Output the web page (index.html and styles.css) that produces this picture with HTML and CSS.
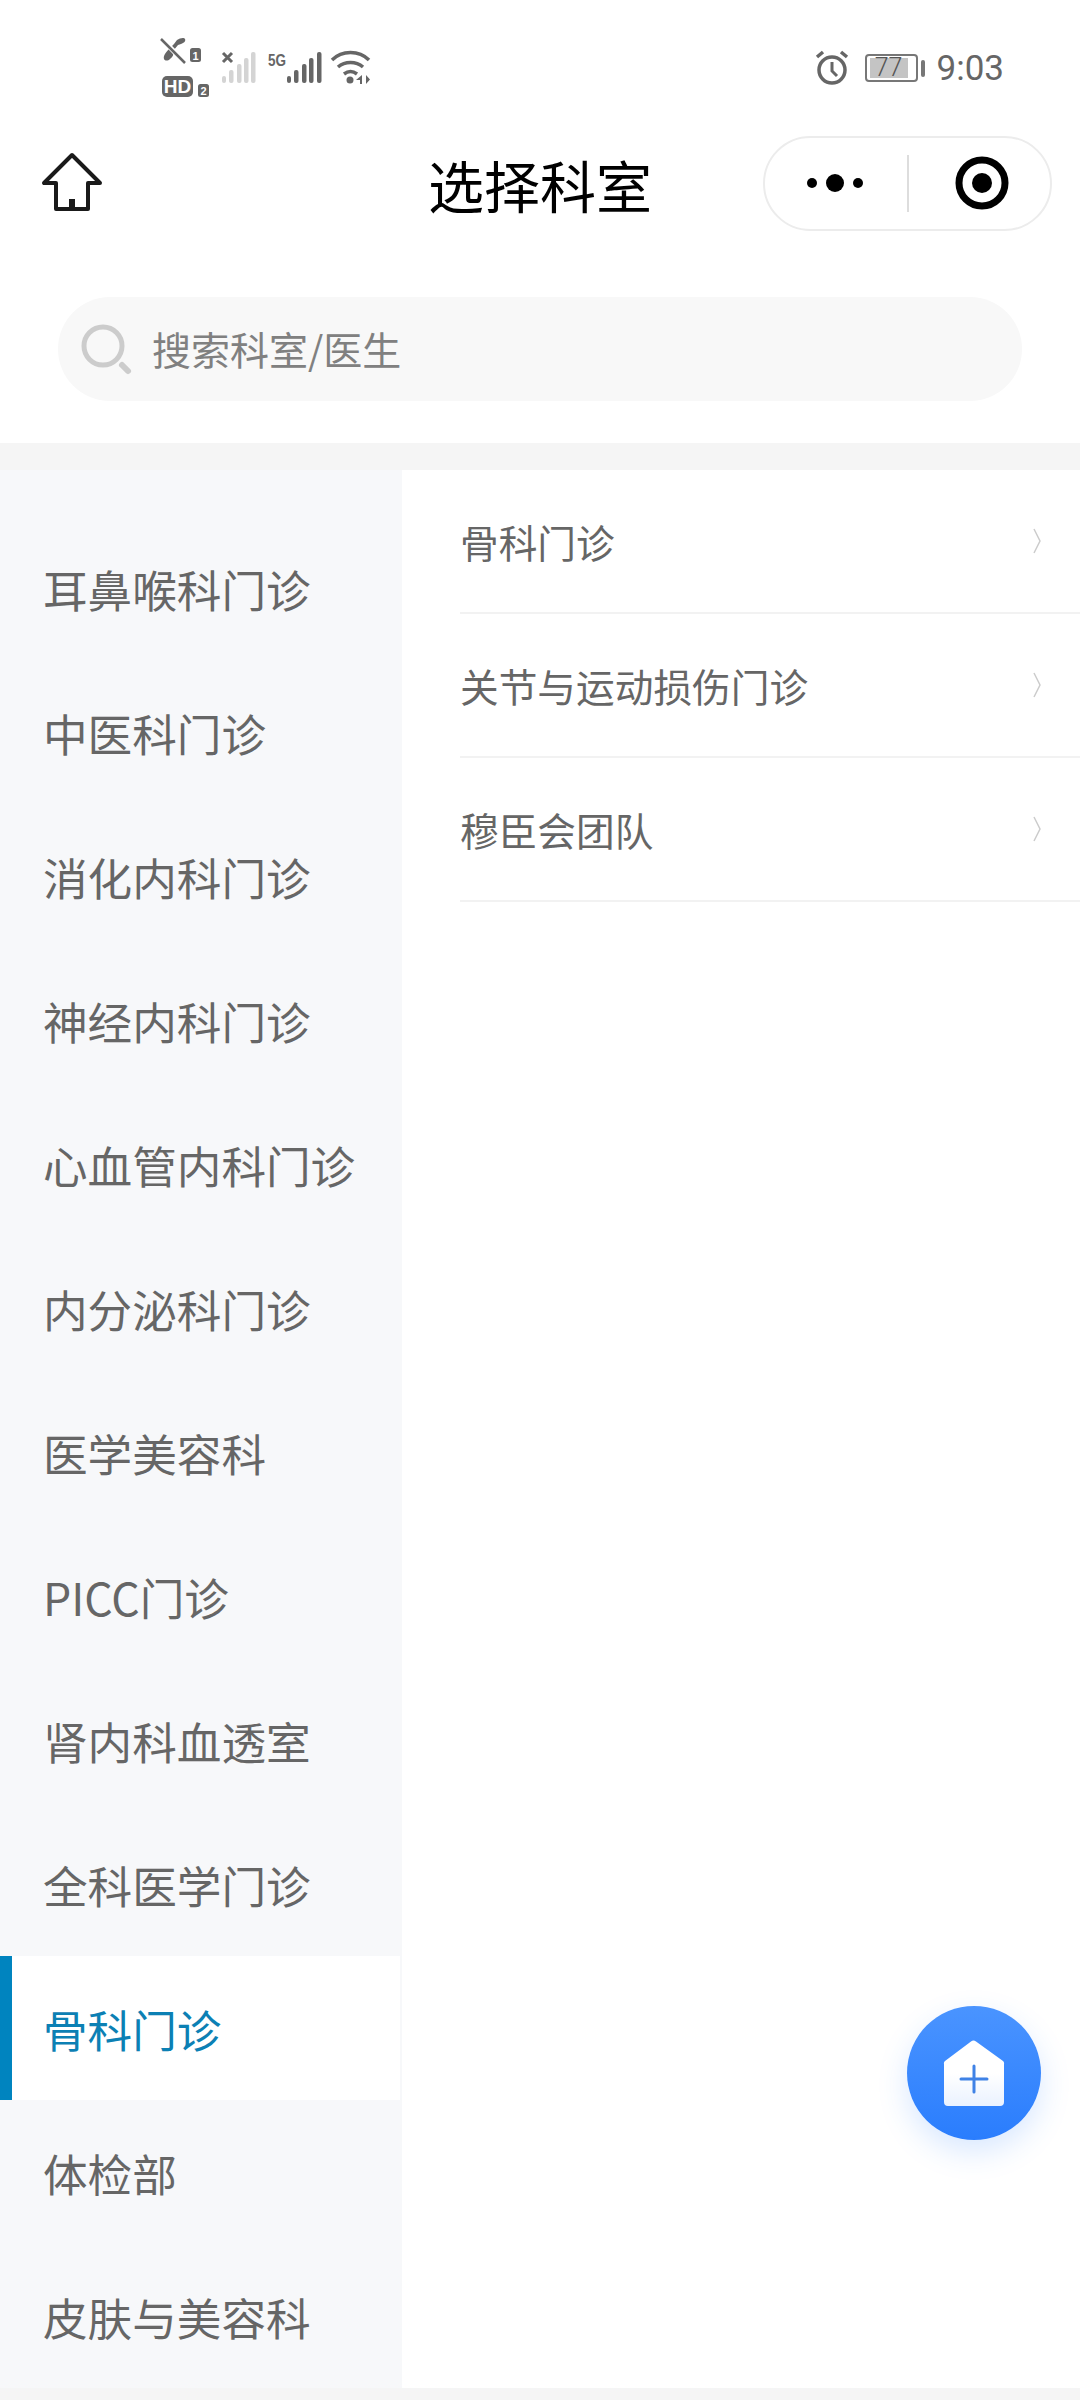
FILE: index.html
```html
<!DOCTYPE html>
<html lang="zh-CN">
<head>
  <meta charset="UTF-8">
  <title>选择科室</title>
  <meta name="viewport" content="width=device-width, initial-scale=1">
  <link rel="stylesheet" href="styles.css">
</head>
<body>

<div class="page">

  <div class="status-bar">
    <svg width="212" height="64" viewBox="160 36 212 64">
      <!-- call + sim 1 -->
      <path d="M177 40c3-2 7-3 8-1s-1 4-4 5l-3 1-5 6c1 3 0 6-3 8-2 2-5 2-6 0-1-3 2-7 5-10l5-5z" fill="#666"/>
      <path d="M162 39l23 24" stroke="#fff" stroke-width="5"/>
      <path d="M161 39l24 24" stroke="#666" stroke-width="2.5"/>
      <rect x="190" y="48" width="11" height="14" rx="2.5" fill="#666"/>
      <text x="195.5" y="59.5" class="tiny-num">1</text>
      <!-- hd + sim 2 -->
      <rect x="162" y="76" width="31" height="21" rx="5" fill="#666"/>
      <text x="177.5" y="92.500" class="hd-text">HD</text>
      <rect x="198" y="84" width="11" height="13" rx="2.5" fill="#666"/>
      <text x="203.5" y="95" class="tiny-num">2</text>
      <!-- sim 1 signal -->
      <path d="M223 53l9 9M232 53l-9 9" stroke="#666" stroke-width="3"/>
      <g fill="#d4d4d4">
        <rect x="222" y="76" width="4" height="7" rx="2"/>
        <rect x="229" y="70" width="4.5" height="13" rx="2"/>
        <rect x="237" y="64" width="4.5" height="19" rx="2"/>
        <rect x="244" y="58" width="4.5" height="25" rx="2"/>
        <rect x="251" y="52" width="4.5" height="31" rx="2"/>
      </g>
      <!-- 5g signal -->
      <text x="268" y="65.500" class="five-g" textLength="18" lengthAdjust="spacingAndGlyphs">5G</text>
      <g fill="#666">
        <rect x="287" y="76" width="4" height="7" rx="2"/>
        <rect x="294" y="70" width="4.5" height="13" rx="2"/>
        <rect x="302" y="64" width="4.5" height="19" rx="2"/>
        <rect x="309" y="58" width="4.5" height="25" rx="2"/>
        <rect x="317" y="52" width="4.5" height="31" rx="2"/>
      </g>
      <!-- wifi -->
      <g fill="none" stroke="#666" stroke-width="3.5">
        <path d="M332 60c10-10 27-10 37 0"/>
        <path d="M338 67c7-6 18-6 25 0"/>
        <path d="M344 74c4-3 9-3 13 0"/>
      </g>
      <circle cx="350" cy="80" r="3.5" fill="#666"/>
      <path d="M362 75v9h-2v-4h-4zM366 75v9l4-4.500z" fill="#666"/>
    </svg>

    <div class="status-right">
      <svg width="36" height="36" viewBox="0 0 36 36" fill="none" stroke="#666">
        <circle cx="18" cy="20" r="13" stroke-width="3.5"/>
        <path d="M18 12v9l5 5" stroke-width="3"/>
        <path d="M3 7l6-5M33 7l-6-5" stroke-width="3.5"/>
      </svg>
      <div class="battery">
        <div class="battery-box">
          <div class="battery-fill"></div>
          <span class="battery-num">77</span>
        </div>
        <div class="battery-nub"></div>
      </div>
      <span class="clock">9:03</span>
    </div>
  </div>

  <div class="nav">
    <svg class="nav-home" width="60" height="60" viewBox="0 0 60 60" fill="none" stroke="#1a1a1a" stroke-width="4" stroke-linejoin="round">
      <path d="M30 2L2 30h12v26h32V30h12z"/>
      <rect x="27" y="46" width="6" height="10" fill="#1a1a1a" stroke="none"/>
    </svg>
    <h1 class="nav-title">选择科室</h1>
    <div class="capsule">
      <svg width="56" height="20" viewBox="0 0 56 20" fill="#000">
        <circle cx="5" cy="10" r="5"/>
        <circle cx="28" cy="10" r="9"/>
        <circle cx="51" cy="10" r="5"/>
      </svg>
      <div class="capsule-line"></div>
      <svg width="54" height="54" viewBox="0 0 54 54">
        <circle cx="27" cy="27" r="23" fill="none" stroke="#000" stroke-width="7"/>
        <circle cx="27" cy="27" r="10" fill="#000"/>
      </svg>
    </div>
  </div>

  <div class="search-wrap">
    <div class="search-bar">
      <svg width="54" height="54" viewBox="0 0 54 54" fill="none" stroke="#ccc">
        <circle cx="24" cy="24" r="19" stroke-width="5"/>
        <path d="M43 43l6 6" stroke-width="6" stroke-linecap="round"/>
      </svg>
      <span class="search-hint">搜索科室/医生</span>
    </div>
  </div>

  <div class="main">
    <div class="dept-list">
      <div class="dept">耳鼻喉科门诊</div>
      <div class="dept">中医科门诊</div>
      <div class="dept">消化内科门诊</div>
      <div class="dept">神经内科门诊</div>
      <div class="dept">心血管内科门诊</div>
      <div class="dept">内分泌科门诊</div>
      <div class="dept">医学美容科</div>
      <div class="dept">PICC门诊</div>
      <div class="dept">肾内科血透室</div>
      <div class="dept">全科医学门诊</div>
      <div class="dept active">骨科门诊</div>
      <div class="dept">体检部</div>
      <div class="dept">皮肤与美容科</div>
    </div>

    <div class="sub-list">
      <div class="sub">
        <span>骨科门诊</span>
        <svg width="9" height="26" viewBox="0 0 9 26" fill="none" stroke="#ccc" stroke-width="1.500"><path d="M1 1l6 12-6 12"/></svg>
      </div>
      <div class="sub">
        <span>关节与运动损伤门诊</span>
        <svg width="9" height="26" viewBox="0 0 9 26" fill="none" stroke="#ccc" stroke-width="1.500"><path d="M1 1l6 12-6 12"/></svg>
      </div>
      <div class="sub">
        <span>穆臣会团队</span>
        <svg width="9" height="26" viewBox="0 0 9 26" fill="none" stroke="#ccc" stroke-width="1.500"><path d="M1 1l6 12-6 12"/></svg>
      </div>
    </div>

    <div class="fab">
      <svg width="62" height="66" viewBox="0 0 62 66">
        <defs>
          <linearGradient id="house-fill" x1="0" y1="0" x2="0" y2="1">
            <stop offset="0.5" stop-color="#fff"/>
            <stop offset="1" stop-color="#eaf2ff"/>
          </linearGradient>
        </defs>
        <path d="M28 1.500a4 4 0 0 1 5 0L60 21a3 3 0 0 1 1 3v38a4 4 0 0 1-4 4H5a4 4 0 0 1-4-4V24a3 3 0 0 1 1-3z" fill="url(#house-fill)"/>
        <path d="M31 26v26M18 39h26" stroke="#3f82e6" stroke-width="3" stroke-linecap="round"/>
      </svg>
    </div>
  </div>

</div>

</body>
</html>
```

FILE: styles.css
```css
* {
  box-sizing: border-box;
}

body {
  margin: 0;
  background-color: #fff;
  font-family: "Noto Sans CJK SC", "Noto Sans", sans-serif;
}

.page {
  display: flex;
  flex-direction: column;
  height: 2400px;
  padding-bottom: 12px;
  background-color: #f5f5f5;
  overflow: hidden;
}

/* Status bar */
.status-bar {
  display: flex;
  justify-content: space-between;
  align-items: center;
  height: 110px;
  padding: 36px 76px 10px 160px;
  background-color: #fff;
}

.tiny-num {
  font-family: "Liberation Sans", sans-serif;
  font-size: 11px;
  font-weight: bold;
  fill: #fff;
  text-anchor: middle;
}

.hd-text {
  font-family: "Liberation Sans", sans-serif;
  font-size: 19px;
  font-weight: bold;
  fill: #fff;
  text-anchor: middle;
}

.five-g {
  font-family: "Liberation Sans", sans-serif;
  font-size: 17px;
  font-weight: bold;
  fill: #666;
}

.status-right {
  display: flex;
  align-items: center;
  color: #666;
}

.battery {
  display: flex;
  align-items: center;
  gap: 3px;
  margin: 0 12px 0 15px;
}

.battery-box {
  position: relative;
  width: 53px;
  height: 28px;
  border: 2px solid #777;
  border-radius: 4px;
}

.battery-fill {
  width: 38px;
  height: 20px;
  margin: 2px 0 0 3px;
  background-color: #c4c4c4;
}

.battery-num {
  position: absolute;
  top: 0;
  left: 3px;
  width: 38px;
  font-family: Roboto, sans-serif;
  font-size: 25px;
  font-weight: 300;
  line-height: 24px;
  text-align: center;
  color: #555;
}

.battery-nub {
  width: 4px;
  height: 17px;
  border-radius: 2px;
  background-color: #777;
}

.clock {
  margin-top: 2px;
  font-family: Roboto, sans-serif;
  font-size: 35px;
  line-height: 40px;
}

/* Nav */
.nav {
  display: grid;
  grid-template-columns: 1fr auto 1fr;
  align-items: center;
  height: 146px;
  padding: 0 28px;
  background-color: #fff;
}

.nav-home {
  margin-left: 14px;
  overflow: visible;
}

.nav-title {
  margin: 0;
  font-size: 56px;
  font-weight: 400;
  color: #000;
}

.capsule {
  display: flex;
  align-items: center;
  justify-self: end;
  width: 289px;
  height: 95px;
  padding-left: 42px;
  border: 2px solid #ececec;
  border-radius: 48px;
}

.capsule-line {
  width: 2px;
  height: 57px;
  margin: 0 46px 0 44px;
  background-color: #ddd;
}

/* Search */
.search-wrap {
  padding: 41px 58px 42px;
  background-color: #fff;
}

.search-bar {
  display: flex;
  align-items: center;
  gap: 19px;
  height: 104px;
  padding-left: 21px;
  border-radius: 52px;
  background-color: #f8f8f8;
}

.search-hint {
  margin-bottom: 2px;
  font-size: 39px;
  color: #808080;
}

/* Columns */
.main {
  position: relative;
  display: flex;
  flex: 1;
  margin-top: 27px;
  min-height: 0;
}

.dept-list {
  width: 402px;
  padding: 46px 2px 0 0;
  background-color: #f7f8fa;
}

.dept {
  display: flex;
  align-items: center;
  height: 144px;
  padding-left: 43px;
  font-size: 44.6px;
  color: #666;
  white-space: nowrap;
}

.dept.active {
  padding-left: 31px;
  border-left: 12px solid #0084bf;
  background-color: #fff;
  color: #0c80b4;
}

.sub-list {
  flex: 1;
  padding-left: 58px;
  background-color: #fff;
}

.sub {
  display: flex;
  justify-content: space-between;
  align-items: center;
  height: 144px;
  padding-right: 38px;
  border-bottom: 2px solid #f2f2f2;
  font-size: 38.700px;
  color: #666;
}

.fab {
  position: absolute;
  top: 1536px;
  right: 39px;
  display: flex;
  justify-content: center;
  align-items: center;
  width: 134px;
  height: 134px;
  border-radius: 50%;
  background: linear-gradient(#4a94ff, #2a7dfd);
  box-shadow: 0 12px 30px rgba(42, 125, 253, 0.18);
}
```
